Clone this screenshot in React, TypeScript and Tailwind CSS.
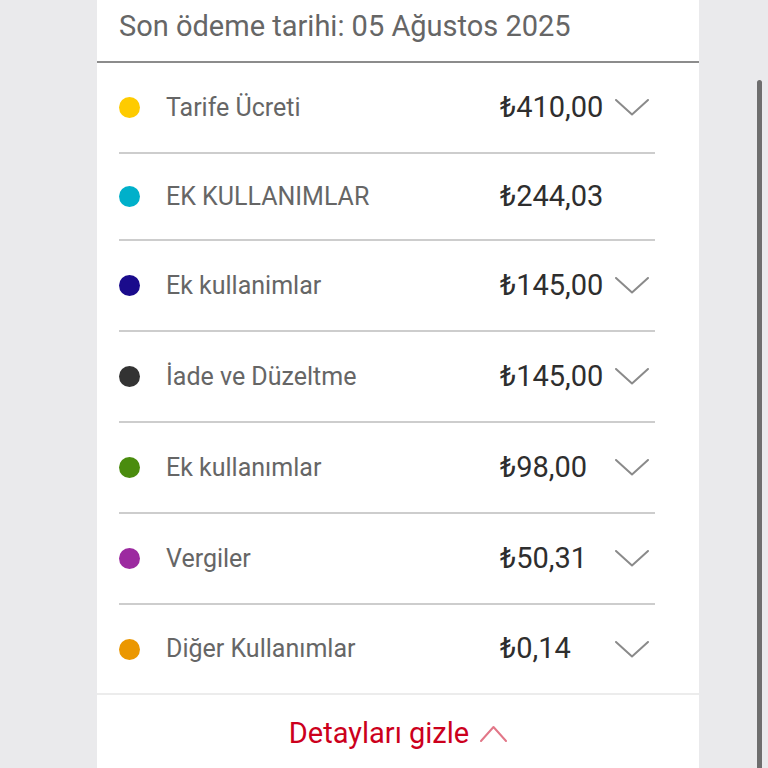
import * as React from 'react';

type Item = {
	label: string;
	amount: string;
	color: string;
	expandable: boolean;
};

const items: Item[] = [
	{ label: 'Tarife Ücreti', amount: '₺410,00', color: 'bg-[#fecb00]', expandable: true },
	{ label: 'EK KULLANIMLAR', amount: '₺244,03', color: 'bg-[#00b0ca]', expandable: false },
	{ label: 'Ek kullanimlar', amount: '₺145,00', color: 'bg-[#1a0b8c]', expandable: true },
	{ label: 'İade ve Düzeltme', amount: '₺145,00', color: 'bg-[#333333]', expandable: true },
	{ label: 'Ek kullanımlar', amount: '₺98,00', color: 'bg-[#4a8c0e]', expandable: true },
	{ label: 'Vergiler', amount: '₺50,31', color: 'bg-[#9c2aa0]', expandable: true },
	{ label: 'Diğer Kullanımlar', amount: '₺0,14', color: 'bg-[#eb9700]', expandable: true },
];

const ChevronDown = () => (
	<svg width="34" height="17" viewBox="0 0 34 17" fill="none">
		<path d="M1 1 L17 15.5 L33 1" stroke="#8a8a8a" strokeWidth="2" strokeLinecap="round" strokeLinejoin="round" />
	</svg>
);

const ChevronUp = () => (
	<svg width="27" height="17" viewBox="0 0 27 17" fill="none">
		<path d="M1 16 L13.5 2 L26 16" stroke="#e27788" strokeWidth="2" strokeLinecap="round" strokeLinejoin="round" />
	</svg>
);

const Row = ({ item, last }: { item: Item; last: boolean }) => {
	const height = item.expandable ? (last ? 'h-[88px]' : 'h-[91px]') : 'h-[87px]';
	return (
		<div
			className={`flex items-center ${height} ${last ? '' : 'border-b-2 border-[#cdcdcd]'}`}
		>
			<div className="w-[47px] flex-none">
				<div className={`w-[21px] h-[21px] rounded-full ${item.color}`} />
			</div>
			<span className="flex-1 text-[25px] text-[#666666]">
				{item.label}
			</span>
			<span className="w-[115px] flex-none text-[29px] text-[#2e2e2e]">
				{item.amount}
			</span>
			<div className="w-[34px] mr-[6px] flex-none flex items-center">
				{item.expandable && <ChevronDown />}
			</div>
		</div>
	);
};

const App = () => {
	return (
		<div
			className="relative w-[768px] h-[768px] overflow-hidden bg-[#eaeaec]"
			style={{ fontFamily: 'Roboto, "Liberation Sans", sans-serif' }}
		>
			<div className="ml-[97px] w-[602px] h-full bg-white flex flex-col">
				<div className="h-[63px] flex-none border-b-2 border-[#8c8c8c] pl-[22px] pt-[7px]">
					<span className="text-[29px] leading-[38px] text-[#666666]">
						Son ödeme tarihi: 05 Ağustos 2025
					</span>
				</div>
				<div className="ml-[22px] w-[536px] flex flex-col">
					{items.map((item, i) => (
						<Row key={i} item={item} last={i === items.length - 1} />
					))}
				</div>
				<div className="border-t-2 border-[#ececec] flex items-center justify-center gap-[11px] h-[76px] pt-[4px]">
					<span className="text-[29px] text-[#cc001c]">Detayları gizle</span>
					<ChevronUp />
				</div>
			</div>
			<div className="absolute left-[757px] top-[80px] w-[5px] h-[700px] rounded-t-full bg-[#6e6e6e]" />
		</div>
	);
};

export default App;
